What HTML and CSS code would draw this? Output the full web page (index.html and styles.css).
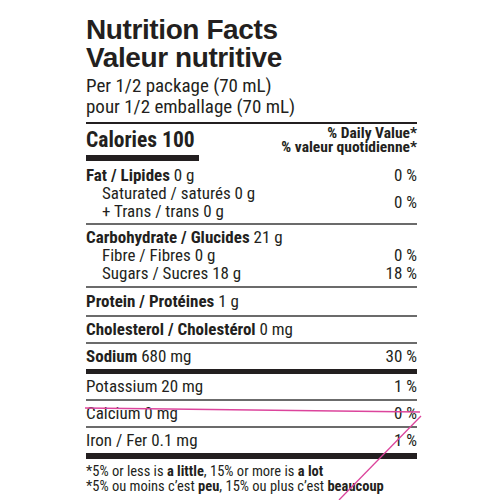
FILE: index.html
```html
<!DOCTYPE html>
<html lang="en">
  <head>
    <meta charset="UTF-8" />
    <title>Nutrition Facts</title>
    <link rel="stylesheet" href="styles.css">
  </head>
  <body>
    <div class="label">
      <h1>Nutrition Facts<br>Valeur nutritive</h1>
      <p class="serving">Per 1/2 package (70 mL)<br>pour 1/2 emballage (70 mL)</p>

      <div class="calories">
        <div class="cal-left">
          <span class="cal-text">Calories 100</span>
          <div class="cal-bar"></div>
        </div>
        <div class="dv-head">% Daily Value*<br>% valeur quotidienne*</div>
      </div>

      <!-- fat -->
      <div class="group fat">
        <div class="row"><span><b>Fat / Lipides</b> 0 g</span><span>0 %</span></div>
        <div class="sub-pair">
          <div class="sub-names">
            <span>Saturated / saturés 0 g</span>
            <span>+ Trans / trans 0 g</span>
          </div>
          <span>0 %</span>
        </div>
      </div>

      <!-- carbs -->
      <div class="group carbs">
        <div class="row"><span><b>Carbohydrate / Glucides</b> 21 g</span></div>
        <div class="row sub"><span>Fibre / Fibres 0 g</span><span>0 %</span></div>
        <div class="row sub"><span>Sugars / Sucres 18 g</span><span>18 %</span></div>
      </div>

      <div class="group single protein"><div class="row"><span><b>Protein / Protéines</b> 1 g</span></div></div>
      <div class="group single"><div class="row"><span><b>Cholesterol / Cholestérol</b> 0 mg</span></div></div>
      <div class="group single sodium"><div class="row"><span><b>Sodium</b> 680 mg</span><span>30 %</span></div></div>

      <div class="group single"><div class="row"><span>Potassium 20 mg</span><span>1 %</span></div></div>
      <div class="group single"><div class="row"><span>Calcium 0 mg</span><span>0 %</span></div></div>
      <div class="group single last"><div class="row"><span>Iron / Fer 0.1 mg</span><span>1 %</span></div></div>

      <p class="foot">*5% or less is <b>a little</b>, 15% or more is <b>a lot</b><br>*5% ou moins c’est <b>peu</b>, 15% ou plus c’est <b>beaucoup</b></p>
    </div>

    <svg class="marks" width="500" height="500" viewBox="0 0 500 500">
      <line x1="85" y1="408" x2="420" y2="412" />
      <line x1="421" y1="416" x2="339" y2="500" />
    </svg>
  </body>
</html>
```

FILE: styles.css
```css
* {
  margin: 0;
  padding: 0;
  box-sizing: border-box;
}
body {
  background: #fff;
  color: #231f20;
  font-family: "Roboto Condensed", "Liberation Sans", Arial, sans-serif;
  width: 500px;
  height: 500px;
  overflow: hidden;
  position: relative;
}
.label {
  width: 331px;
  margin-left: 86px;
  padding-top: 16px;
}
h1 {
  font-family: "Liberation Sans", Arial, sans-serif;
  font-size: 28px;
  line-height: 28px;
  font-weight: bold;
  letter-spacing: -0.4px;
}
.serving {
  font-size: 19px;
  line-height: 21px;
  margin-top: 3px;
  padding-bottom: 5px;
  border-bottom: 2px solid #231f20;
}
.calories {
  display: flex;
  justify-content: space-between;
}
.cal-text {
  display: block;
  font-size: 21.5px;
  font-weight: bold;
  line-height: 24px;
  margin-top: 4px;
}
.cal-bar {
  width: 113px;
  height: 6px;
  background: #231f20;
  margin-top: 3px;
}
.dv-head {
  font-size: 15.5px;
  font-weight: bold;
  text-align: right;
  line-height: 14px;
  margin-top: 2px;
}
.group {
  border-bottom: 2px solid #6b6b6b;
  font-size: 17px;
  line-height: 18px;
}
.group.fat {
  padding: 5px 0 3px;
}
.group.carbs {
  padding: 3px 0 4px;
}
.group.single {
  padding: 2px 0 3px;
  line-height: 20px;
}
.group.protein {
  padding: 3px 0 4px;
}
.row {
  display: flex;
  justify-content: space-between;
}
.row.sub {
  padding-left: 16px;
}
.sub-pair {
  display: flex;
  justify-content: space-between;
  align-items: center;
  padding-left: 16px;
}
.sub-names {
  display: flex;
  flex-direction: column;
}
.group.sodium {
  border-bottom: 5px solid #231f20;
}
.group.last {
  border-bottom: 6px solid #231f20;
}
.foot {
  font-size: 14.5px;
  line-height: 15px;
  padding-top: 5px;
}
.marks {
  position: absolute;
  left: 0;
  top: 0;
  pointer-events: none;
}
.marks line {
  stroke: #dc449c;
  stroke-width: 1.3;
}
```
